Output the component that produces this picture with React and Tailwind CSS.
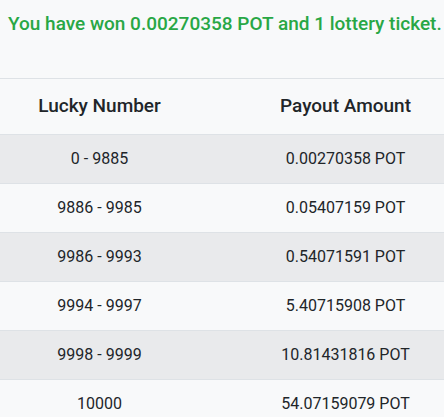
const rows = [
  ["0 - 9885", "0.00270358 POT"],
  ["9886 - 9985", "0.05407159 POT"],
  ["9986 - 9993", "0.54071591 POT"],
  ["9994 - 9997", "5.40715908 POT"],
  ["9998 - 9999", "10.81431816 POT"],
  ["10000", "54.07159079 POT"],
];

export default function App() {
  return (
    <div className="w-[444px] h-[417px] overflow-hidden bg-[#f8f9fa] text-[#212529] font-['Roboto',sans-serif]">
      <div className="w-[492px]">
        <div className="h-[78px] pl-2 pt-[10px] text-[19px] font-medium text-[#28a745] whitespace-nowrap">
          You have won 0.00270358 POT and 1 lottery ticket.
        </div>
        <div className="border-t border-[#dee2e6]">
          <div className="grid grid-cols-[199px_293px] h-[55px] items-center text-center text-[19px] font-medium">
            <div>Lucky Number</div>
            <div>Payout Amount</div>
          </div>
          {rows.map((r, i) => (
            <div
              key={i}
              className={`grid grid-cols-[199px_293px] h-[49px] items-center text-center text-[16px] border-t border-[#dee2e6] ${i % 2 === 0 ? "bg-[#e9eaec]" : "bg-[#f8f9fa]"}`}
            >
              <div>{r[0]}</div>
              <div>{r[1]}</div>
            </div>
          ))}
        </div>
      </div>
    </div>
  );
}
